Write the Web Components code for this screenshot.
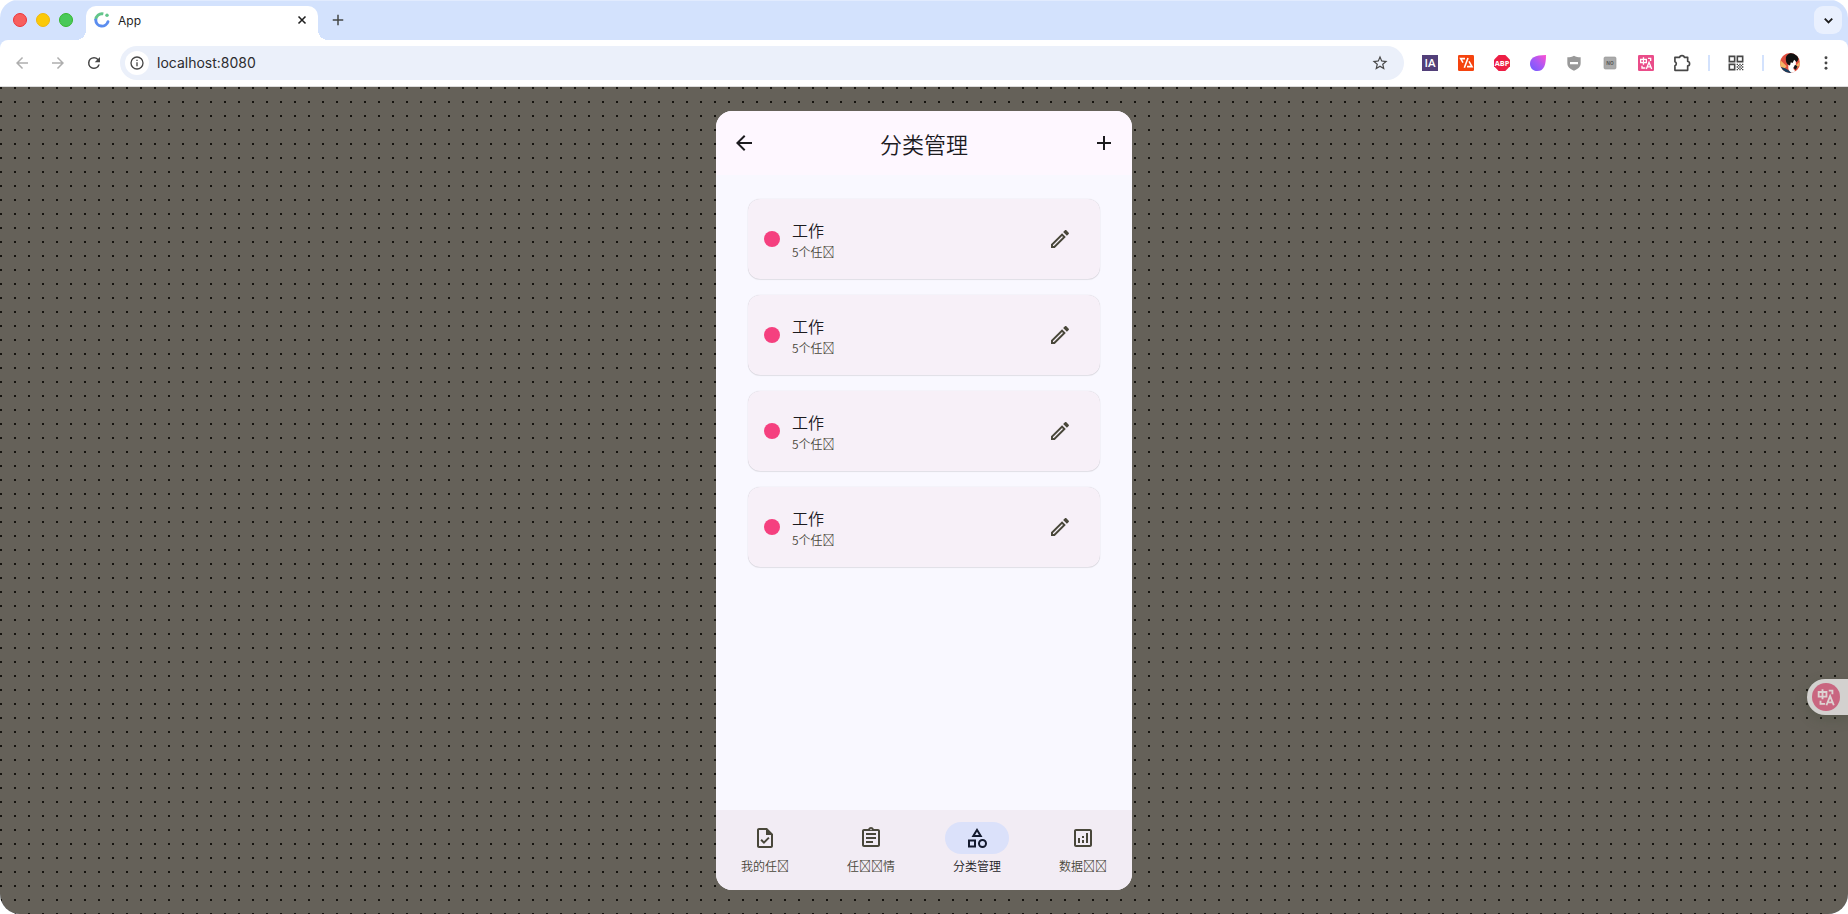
<!DOCTYPE html>
<html lang="zh-CN">
<head>
<meta charset="utf-8">
<title>App</title>
<style>
  html, body {
    height: 100%;
    margin: 0;
  }

  body {
    background: #fff;
    font-family: "Noto Sans CJK SC", sans-serif;
  }
</style>
</head>
<body>
<browser-window>
  <tab-strip slot="tabs" title="App"></tab-strip>
  <browser-toolbar slot="toolbar" url="localhost:8080"></browser-toolbar>
  <phone-frame>
    <app-bar slot="header">分类管理</app-bar>
    <category-card color="#f5407f" name="工作">5个任&#xF0000;</category-card>
    <category-card color="#f5407f" name="工作">5个任&#xF0000;</category-card>
    <category-card color="#f5407f" name="工作">5个任&#xF0000;</category-card>
    <category-card color="#f5407f" name="工作">5个任&#xF0000;</category-card>
    <nav-item slot="nav" icon="task">我的任&#xF0000;</nav-item>
    <nav-item slot="nav" icon="assignment">任&#xF0000;&#xF0000;情</nav-item>
    <nav-item slot="nav" icon="category" active>分类管理</nav-item>
    <nav-item slot="nav" icon="analytics">数据&#xF0000;&#xF0000;</nav-item>
  </phone-frame>
  <translate-badge slot="overlay"></translate-badge>
</browser-window>

<script>
const ICONS = {
  back: '<path d="M20 11H7.83l5.59-5.59L12 4l-8 8 8 8 1.41-1.41L7.83 13H20v-2z"/>',
  forward: '<path d="M4 11h12.17l-5.59-5.59L12 4l8 8-8 8-1.41-1.41L16.17 13H4v-2z"/>',
  add: '<path d="M19 13h-6v6h-2v-6H5v-2h6V5h2v6h6v2z"/>',
  close: '<path d="M6 6l12 12M18 6L6 18" fill="none" stroke="currentColor" stroke-width="2.6"/>',
  chevron: '<path d="M6 9l6 6 6-6" fill="none" stroke="currentColor" stroke-width="3"/>',
  reload: '<path d="M17.65 6.35A7.96 7.96 0 0 0 12 4a8 8 0 1 0 7.73 10h-2.08A6 6 0 1 1 12 6c1.66 0 3.14.69 4.22 1.78L13 11h7V4l-2.35 2.35z"/>',
  info: '<path d="M11 7h2v2h-2zm0 4h2v6h-2zm1-9a10 10 0 1 0 0 20 10 10 0 0 0 0-20zm0 18a8 8 0 1 1 0-16 8 8 0 0 1 0 16z"/>',
  star: '<path d="M22 9.24l-7.19-.62L12 2 9.19 8.63 2 9.24l5.46 4.73L5.82 21 12 17.27 18.18 21l-1.63-7.03L22 9.24zM12 15.4l-3.76 2.27 1-4.28-3.32-2.88 4.38-.38L12 6.1l1.71 4.04 4.38.38-3.32 2.88 1 4.28L12 15.4z"/>',
  edit: '<path d="M14.06 9.02l.92.92L5.92 19H5v-.92l9.06-9.06M17.66 3c-.25 0-.51.1-.7.29l-1.83 1.83 3.75 3.75 1.83-1.83c.39-.39.39-1.02 0-1.41l-2.34-2.34c-.2-.2-.45-.29-.71-.29zm-3.6 3.19L3 17.25V21h3.75L17.81 9.94l-3.75-3.75z"/>',
  task: '<path d="M14 2H6c-1.1 0-1.99.9-1.99 2L4 20c0 1.1.89 2 1.99 2H18c1.1 0 2-.9 2-2V8l-6-6zm4 18H6V4h7v5h5v11zm-9.18-6.95L7.4 14.46 10.94 18l5.66-5.66-1.41-1.41-4.24 4.24-2.13-2.12z"/>',
  assignment: '<path d="M7 15h7v2H7zm0-4h10v2H7zm0-4h10v2H7z"/><path d="M19 3h-4.18C14.4 1.84 13.3 1 12 1s-2.4.84-2.82 2H5c-1.1 0-2 .9-2 2v14c0 1.1.9 2 2 2h14c1.1 0 2-.9 2-2V5c0-1.1-.9-2-2-2zm-7-.25c.41 0 .75.34.75.75s-.34.75-.75.75-.75-.34-.75-.75.34-.75.75-.75zM19 19H5V5h14v14z"/>',
  category: '<path d="M12 2l-5.5 9h11L12 2zm0 3.84L13.93 9h-3.87L12 5.84zM17.5 13a4.5 4.5 0 1 0 0 9 4.5 4.5 0 0 0 0-9zm0 7a2.5 2.5 0 1 1 0-5 2.5 2.5 0 0 1 0 5zM3 21.5h8v-8H3v8zm2-6h4v4H5v-4z"/>',
  analytics: '<path d="M19 3H5c-1.1 0-2 .9-2 2v14c0 1.1.9 2 2 2h14c1.1 0 2-.9 2-2V5c0-1.1-.9-2-2-2zm0 16H5V5h14v14z"/><path d="M7 12h2v5H7zM15 7h2v10h-2zM11 14h2v3h-2zM11 10h2v2h-2z"/>',
  more: '<circle cx="12" cy="4" r="2.2"/><circle cx="12" cy="12" r="2.2"/><circle cx="12" cy="20" r="2.2"/>',
  puzzle: '<path d="M3.5 5.2h5.8a2.7 2 0 0 1 5.4 0h4.1v5a2.3 2.6 0 0 1 0 5.2v5.4H3.5v-5.4a2.7 2.7 0 0 0 0-5z" fill="none" stroke="currentColor" stroke-width="2" stroke-linejoin="round"/>',
  qr: '<path d="M2 2h8v8H2zM14 2h8v8h-8zM2 14h8v8H2z" fill="none" stroke="currentColor" stroke-width="2.4"/><path d="M13 13h2v2h-2zM17 13h2v2h-2zM21 13h2v2h-2zM15 15h2v2h-2zM19 15h2v2h-2zM13 17h2v2h-2zM17 17h2v2h-2zM21 17h2v2h-2zM15 19h2v2h-2zM19 19h2v2h-2zM13 21h2v2h-2zM17 21h2v2h-2zM21 21h2v2h-2z"/>',
  favicon: '<path d="M2.6 12A9.4 9.4 0 0 1 14 2.8" fill="none" stroke="#63c58a" stroke-width="4.4"/><path d="M2.6 12A9.4 9.4 0 0 0 21 14.5" fill="none" stroke="#5b8def" stroke-width="4.4" stroke-linecap="round"/><circle cx="19.5" cy="5" r="2.6" fill="#63c58a"/>',
  ia: '<path fill="#523f79" d="M0 0h24v24H0z"/><text x="12" y="18" fill="#fff" font-family="Open Sans, sans-serif" font-weight="600" font-size="17" text-anchor="middle">IA</text>',
  svg: '<rect width="24" height="24" rx="2" fill="#f5430e"/><path d="M10.5 5.5H4l3.5 6M15 4.500L9.500 19M16.500 9.500l4.500 8h-7.500" fill="none" stroke="#fff" stroke-width="2.400"/>',
  abp: '<path d="M7 0h10l7 7v10l-7 7H7l-7-7V7z" fill="#ed1e45"/><text x="12" y="16" fill="#fff" font-family="Open Sans, sans-serif" font-weight="700" font-size="11" text-anchor="middle">ABP</text>',
  drop: '<defs><linearGradient id="g" x1="0" y1="1" x2="1" y2="0"><stop offset="0" stop-color="#6a5cff"/><stop offset=".5" stop-color="#a958f5"/><stop offset="1" stop-color="#ff4fd0"/></linearGradient></defs><path d="M24 0c0 15-3 24-13 24C4 24 0 19 0 13 0 5 7 0 24 0z" fill="url(#g)"/>',
  shield: '<path d="M12 1c3 2 6 2.5 10 2.5V12c0 6-4 9-10 11.500C6 21 2 18 2 12V3.500C6 3.500 9 3 12 1z" fill="#999"/><path fill="#fff" d="M6 10.500h12v3.400H6z"/>',
  no: '<rect x="3" y="3" width="18" height="18" rx="2" fill="#aaa" stroke="#999"/><text x="12" y="14.5" fill="#555" font-family="Open Sans, sans-serif" font-weight="700" font-size="7" text-anchor="middle">NO</text>',
  translate: '<rect width="24" height="24" rx="2" fill="var(--tile, #ea4c89)"/><g stroke="var(--ink, #fff)" fill="none" stroke-width="2"><path d="M4 6.500h8.500v5H4zM8.200 3.500v11M15 5h4v4M6 16v3.500h5"/><path d="M12.500 21l4-10 4 10M14 17.800h5"/></g>',
  avatar: '<clipPath id="c"><circle cx="12" cy="12" r="12"/></clipPath><g clip-path="url(#c)"><path fill="#e04f3f" d="M0 0h24v24H0z"/><path fill="#f4b566" d="M0 8l8 8-4 4-6-8zM17 17l7-7v4l-5 5z"/><path fill="#fff" d="M10 8h9v7l-3 4 4 5h-8l-2-5z"/><path fill="#111" d="M7 7c0-4 3-7 8-7s8 3 7 8l-2 3-3-3-2 4-2-1-1 4c-4-1-5-4-5-8z"/><path fill="#173f5f" d="M0 17c6 0 10 3 14 7H0z"/><path fill="#15141a" d="M18 14l3 2-2 4-3-2z"/></g>',
};

class BaseElement extends HTMLElement {
  constructor() {
    super();
    this.attachShadow({ mode: "open" });
  }

  connectedCallback() {
    this.shadowRoot.innerHTML = this.template();
  }
}

class UiIcon extends BaseElement {
  template() {
    const size = this.getAttribute("size") || 24;

    return `
    <style>
      :host {
        display: block;
        flex: none;
      }

      svg {
        display: block;
        overflow: visible;
        fill: currentColor;
      }
    </style>
    <svg width="${size}" height="${size}" viewBox="0 0 24 24" aria-hidden="true">${ICONS[this.getAttribute("name")]}</svg>
    `;
  }
}

class IconButton extends BaseElement {
  template() {
    const name = this.getAttribute("icon");
    const label = this.getAttribute("label") || name;

    return `
    <style>
      :host {
        display: block;
        flex: none;
      }

      button {
        display: flex;
        align-items: center;
        justify-content: center;
        width: var(--button-size, 36px);
        height: var(--button-size, 36px);
        padding: 0;
        border: 0;
        border-radius: var(--button-radius, 50%);
        background: var(--button-background, none);
        color: inherit;
        cursor: pointer;
      }
    </style>
    <button type="button" aria-label="${label}">
      <ui-icon name="${name}" size="${this.getAttribute("size") || 24}"></ui-icon>
    </button>
    `;
  }
}

class BrowserWindow extends BaseElement {
  template() {
    return `
    <style>
      :host {
        display: flex;
        flex-direction: column;
        min-height: 100vh;
        border-radius: 18px 18px 20px 20px;
        overflow: hidden;
        background: #d3e2fd;
      }

      main {
        flex: 1;
        display: flex;
        justify-content: center;
        padding: 24px;
        background: #656159 conic-gradient(from 270deg at 2px 2px, #15130f 90deg, transparent 0) 0 0 / 14px 14px;
      }
    </style>
    <slot name="tabs"></slot>
    <slot name="toolbar"></slot>
    <main><slot></slot></main>
    <slot name="overlay"></slot>
    `;
  }
}

class TabStrip extends BaseElement {
  template() {
    return `
    <style>
      :host {
        display: flex;
        align-items: center;
        height: 40px;
        box-sizing: border-box;
        padding: 0 6px 0 13px;
        box-shadow: inset 0 1px #e1ebfe;
        font-family: Inter, sans-serif;
        color: #1f1f1f;
      }

      .lights {
        display: flex;
        gap: 9px;
        width: 73px;
      }

      .lights span {
        box-sizing: border-box;
        width: 14px;
        height: 14px;
        border-radius: 50%;
        background: #f75f5e;
        border: 1px solid #ee3338;
      }

      .lights span:nth-child(2) {
        background: #fbc908;
        border-color: #efb80a;
      }

      .lights span:nth-child(3) {
        background: #49c959;
        border-color: #35b72d;
      }

      .tab {
        position: relative;
        align-self: flex-end;
        box-sizing: border-box;
        display: flex;
        align-items: center;
        gap: 8px;
        width: 232px;
        height: 34px;
        padding: 0 4px 6px 8px;
        border-radius: 10px 10px 0 0;
        background: #fff;
        font-size: 12px;
      }

      /* flared feet of the active tab */
      .tab::before,
      .tab::after {
        content: "";
        position: absolute;
        bottom: 0;
        width: 10px;
        height: 10px;
        right: 100%;
        background: radial-gradient(circle at 0 0, transparent 10px, #fff 10px);
      }

      .tab::after {
        right: auto;
        left: 100%;
        background: radial-gradient(circle at 100% 0, transparent 10px, #fff 10px);
      }

      .name {
        flex: 1;
      }

      .tab icon-button {
        --button-size: 24px;
      }

      .new {
        --button-size: 28px;
        margin-left: 6px;
        color: #444746;
      }

      .search {
        --button-size: 28px;
        --button-radius: 9px;
        --button-background: #e9f0fe;
        margin-left: auto;
      }
    </style>
    <div class="lights"><span></span><span></span><span></span></div>
    <div class="tab">
      <ui-icon name="favicon" size="16"></ui-icon>
      <span class="name">${this.title}</span>
      <icon-button icon="close" size="14"></icon-button>
    </div>
    <icon-button class="new" icon="add" size="18"></icon-button>
    <icon-button class="search" icon="chevron" size="15"></icon-button>
    `;
  }
}

class BrowserToolbar extends BaseElement {
  template() {
    const extensions = ["ia", "svg", "abp", "drop", "shield", "no", "translate"];

    return `
    <style>
      :host {
        box-sizing: border-box;
        display: flex;
        align-items: center;
        height: 47px;
        padding: 0 4px;
        border-bottom: 1px solid #dcdcdc;
        border-radius: 8px 8px 0 0;
        background: #fff;
        color: #474747;
      }

      .dim {
        color: #aeaeae;
      }

      .address {
        flex: 1;
        display: flex;
        align-items: center;
        height: 34px;
        margin: 0 8px;
        padding-left: 5px;
        box-sizing: border-box;
        border-radius: 17px;
        background: #ebf0fa;
      }

      .site {
        --button-size: 24px;
        --button-background: #fff;
      }

      .address icon-button:last-child {
        margin-right: 6px;
      }

      input {
        flex: 1;
        min-width: 0;
        margin: 0 0 0 8px;
        padding: 0;
        border: 0;
        outline: 0;
        background: none;
        font: 14px/20px Inter, sans-serif;
        color: #2b2c2e;
      }

      .line {
        flex: none;
        width: 2px;
        height: 16px;
        margin: 0 8px;
        background: #d3e2fd;
      }
    </style>
    <icon-button class="dim" icon="back" size="18"></icon-button>
    <icon-button class="dim" icon="forward" size="18"></icon-button>
    <icon-button icon="reload" size="18"></icon-button>
    <div class="address">
      <icon-button class="site" icon="info" size="16"></icon-button>
      <input type="text" aria-label="Address" value="${this.getAttribute("url")}">
      <icon-button icon="star" size="18"></icon-button>
    </div>
    ${extensions.map((name) => `<icon-button icon="${name}" size="16"></icon-button>`).join("")}
    <icon-button icon="puzzle" size="20"></icon-button>
    <span class="line"></span>
    <icon-button icon="qr" size="16"></icon-button>
    <span class="line"></span>
    <icon-button icon="avatar" size="20"></icon-button>
    <icon-button icon="more" size="16"></icon-button>
    `;
  }
}

class PhoneFrame extends BaseElement {
  template() {
    return `
    <style>
      :host {
        display: flex;
        flex-direction: column;
        width: 100%;
        max-width: 416px;
        border-radius: 16px;
        overflow: hidden;
        background: #f9f8ff;
        color: #1c1b1f;
        font-weight: 350;
      }

      .list {
        flex: 1;
        display: flex;
        flex-direction: column;
        gap: 16px;
        padding: 24px 32px;
      }

      nav {
        display: flex;
        gap: 8px;
        padding: 12px 0 16px;
        background: #f2ecf4;
      }
    </style>
    <slot name="header"></slot>
    <div class="list"><slot></slot></div>
    <nav><slot name="nav"></slot></nav>
    `;
  }
}

class AppBar extends BaseElement {
  template() {
    return `
    <style>
      :host {
        display: flex;
        align-items: center;
        height: 64px;
        padding: 0 8px;
        background: #fef7ff;
      }

      icon-button {
        --button-size: 40px;
      }

      h1 {
        flex: 1;
        margin: 0;
        text-align: center;
        font-size: 22px;
        line-height: 28px;
        font-weight: inherit;
      }
    </style>
    <icon-button icon="back"></icon-button>
    <h1><slot></slot></h1>
    <icon-button icon="add"></icon-button>
    `;
  }
}

class CategoryCard extends BaseElement {
  template() {
    return `
    <style>
      :host {
        box-sizing: border-box;
        display: flex;
        align-items: center;
        gap: 12px;
        height: 80px;
        padding: 0 16px;
        border-radius: 12px;
        background: #f7f0f8;
        box-shadow: 0 0 1px rgba(0, 0, 0, 0.2), 0 1px 1px rgba(0, 0, 0, 0.08);
      }

      .dot {
        width: 16px;
        height: 16px;
        border-radius: 50%;
        background: ${this.getAttribute("color")};
      }

      .text {
        flex: 1;
        display: grid;
        gap: 2px;
      }

      .name {
        font-size: 16px;
        line-height: 24px;
      }

      .count {
        font-size: 12px;
        line-height: 16px;
        color: #49473a;
      }

      icon-button {
        --button-size: 48px;
        color: #49473a;
      }
    </style>
    <span class="dot"></span>
    <div class="text">
      <div class="name">${this.getAttribute("name")}</div>
      <div class="count"><slot></slot></div>
    </div>
    <icon-button icon="edit"></icon-button>
    `;
  }
}

class NavItem extends BaseElement {
  template() {
    return `
    <style>
      :host {
        flex: 1;
        color: #49473a;
      }

      :host([active]) {
        color: #1c1b1f;
      }

      a {
        display: flex;
        flex-direction: column;
        align-items: center;
        gap: 4px;
        color: inherit;
        text-decoration: none;
        font-size: 12px;
        line-height: 16px;
      }

      .pill {
        display: flex;
        align-items: center;
        justify-content: center;
        width: 64px;
        height: 32px;
        border-radius: 16px;
      }

      :host([active]) .pill {
        background: #dbe1fa;
        color: #141a2e;
      }
    </style>
    <a href="#${this.getAttribute("icon")}">
      <span class="pill"><ui-icon name="${this.getAttribute("icon")}"></ui-icon></span>
      <span><slot></slot></span>
    </a>
    `;
  }
}

class TranslateBadge extends BaseElement {
  template() {
    return `
    <style>
      :host {
        position: fixed;
        right: 0;
        bottom: 199px;
        display: flex;
        padding: 4px 8px 4px 5px;
        border-radius: 18px 0 0 18px;
        background: #d3d1cf;
        box-shadow: 0 4px 12px rgba(70, 80, 60, 0.4);
      }

      icon-button {
        --button-size: 28px;
        --button-background: #c96680;
        --tile: none;
        --ink: #ddd3d2;
      }
    </style>
    <icon-button icon="translate" size="22"></icon-button>
    `;
  }
}

customElements.define("ui-icon", UiIcon);
customElements.define("icon-button", IconButton);
customElements.define("browser-window", BrowserWindow);
customElements.define("tab-strip", TabStrip);
customElements.define("browser-toolbar", BrowserToolbar);
customElements.define("phone-frame", PhoneFrame);
customElements.define("app-bar", AppBar);
customElements.define("category-card", CategoryCard);
customElements.define("nav-item", NavItem);
customElements.define("translate-badge", TranslateBadge);
</script>
</body>
</html>
